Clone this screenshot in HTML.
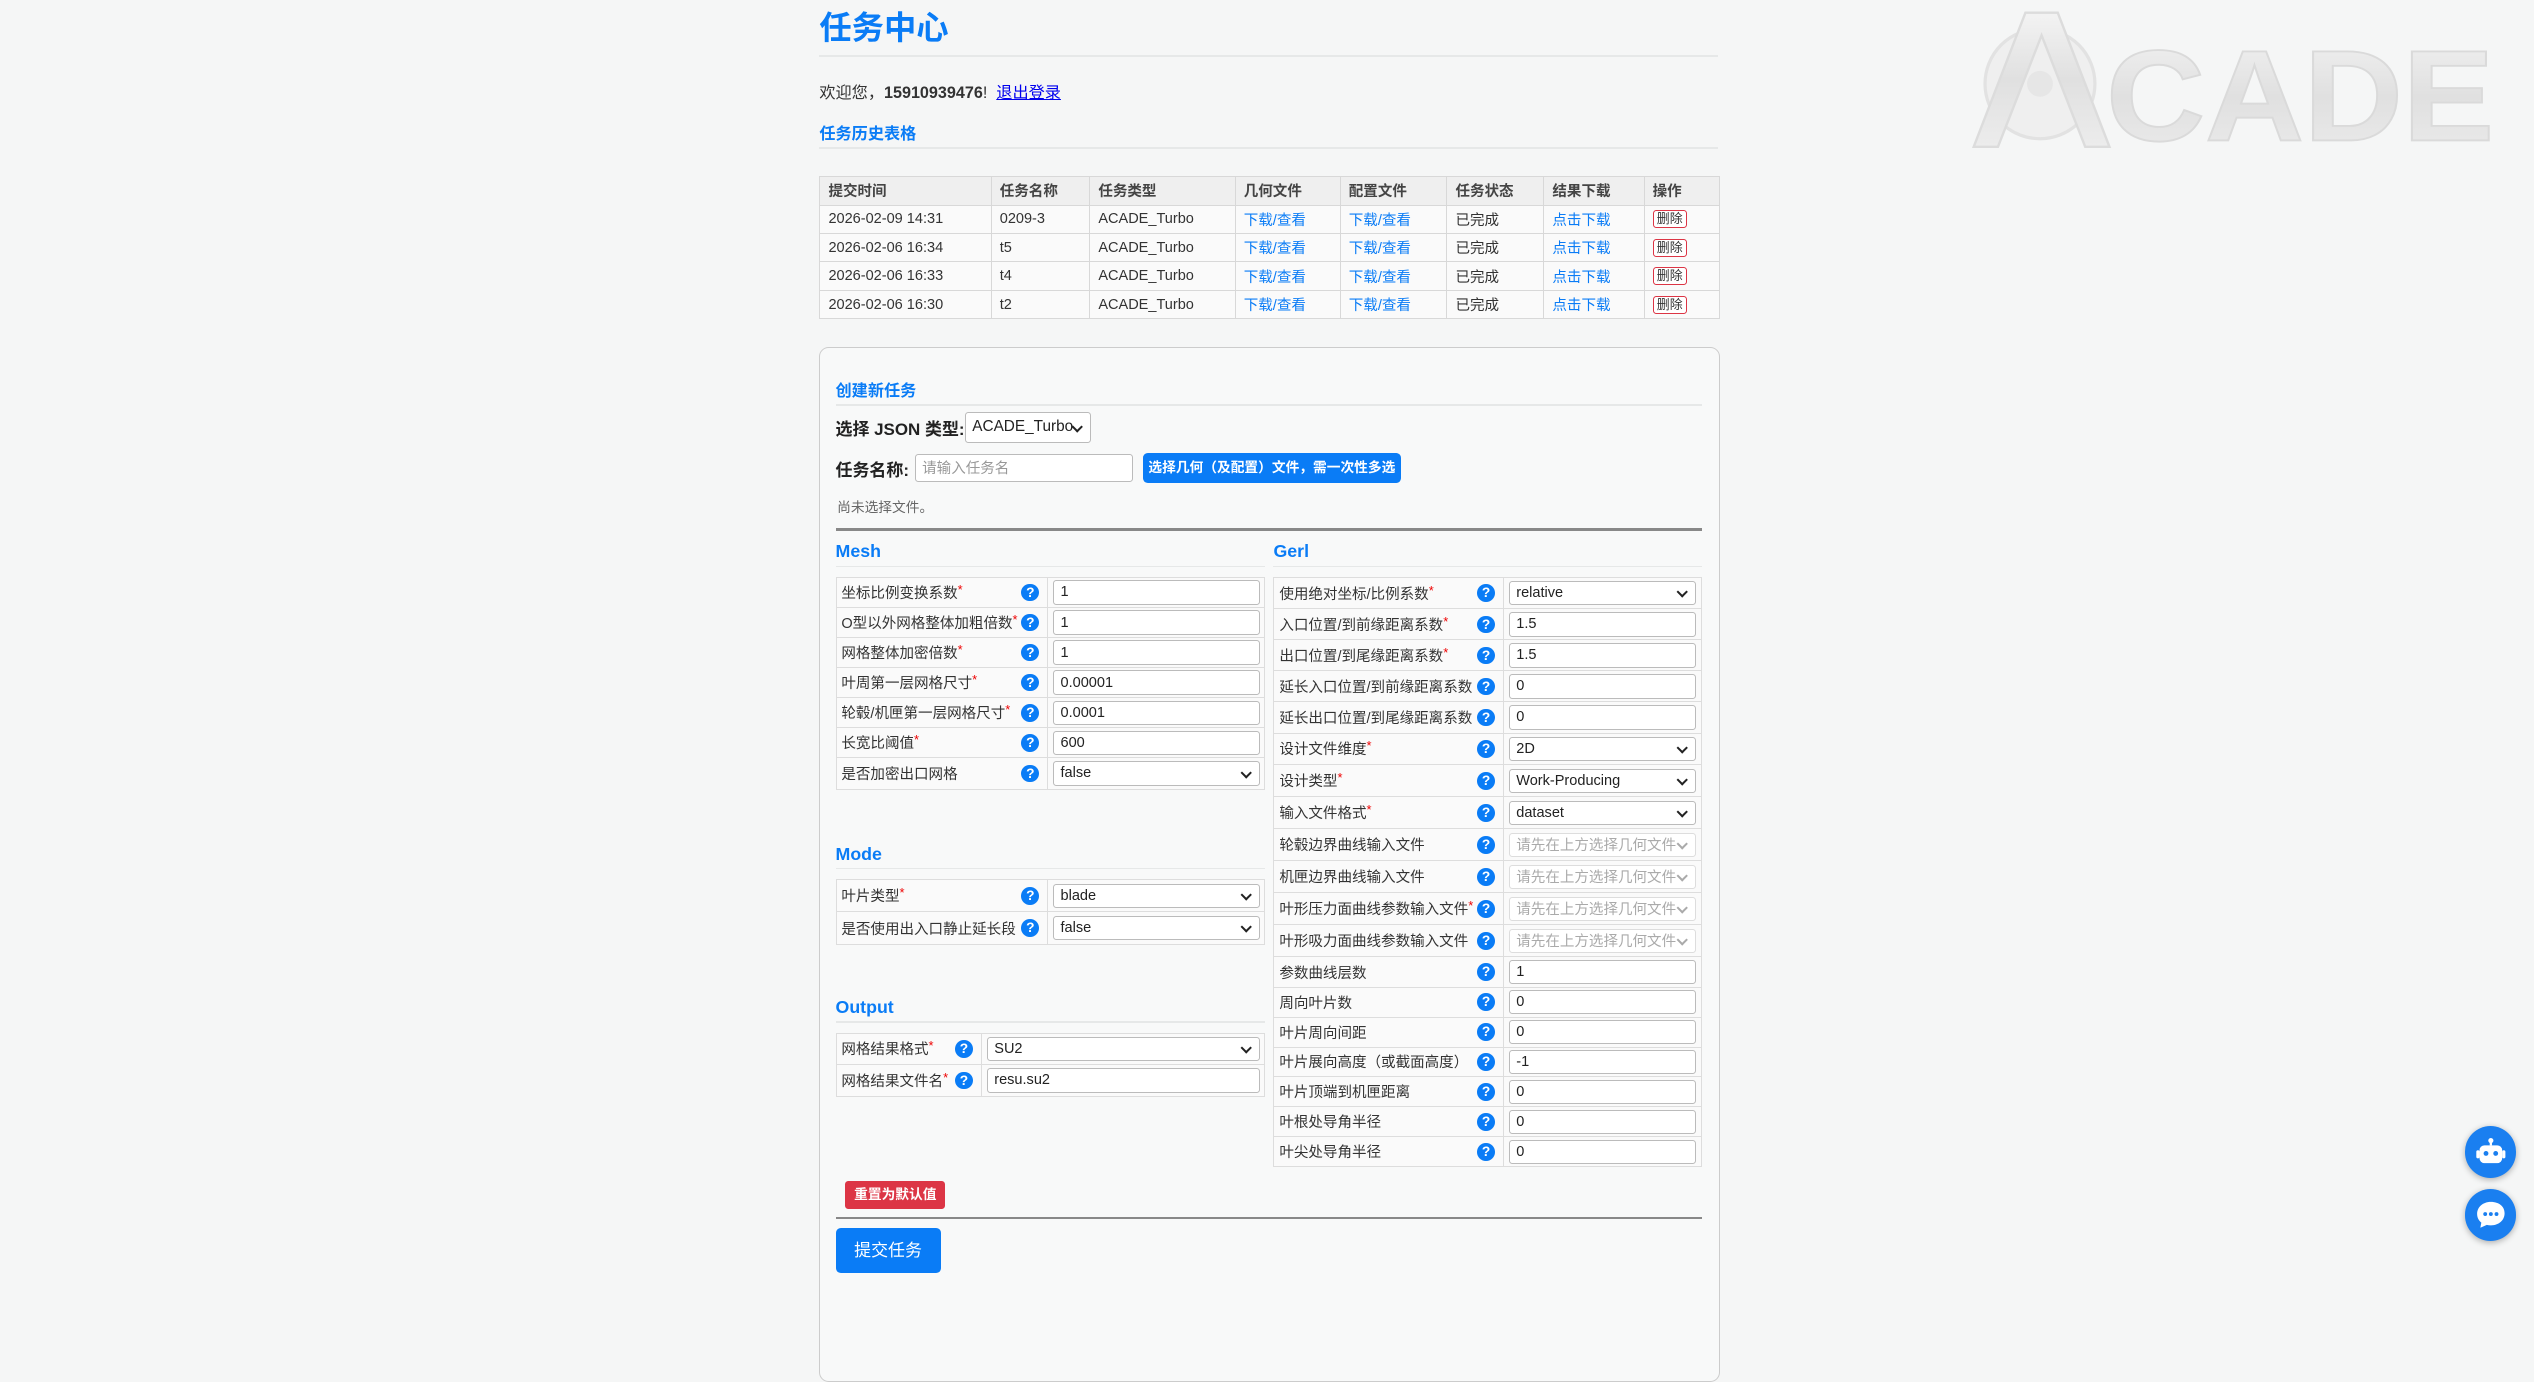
<!DOCTYPE html>
<html><head><meta charset="utf-8">
<style>
html{zoom:1.6161}
*{box-sizing:border-box;margin:0;padding:0}
body{width:1568px;height:783px;overflow:hidden;background:#f5f6f6;font-family:"Liberation Sans","Noto Sans CJK SC",sans-serif;color:#333;font-size:9.5px;position:relative}
.blue{color:#0a7cf6}
h1{position:absolute;left:507px;top:2px;font-size:20px;color:#0a7cf6;font-weight:bold}
.line{position:absolute;height:1px;background:#e6e8e8}
table{border-collapse:collapse;position:absolute}
.hist td,.hist th{border:1px solid #d8d8d8;height:17.6px;padding:0 5px;text-align:left;font-weight:normal;font-size:9px;white-space:nowrap}
.hist th{background:#efefef;font-weight:bold;color:#444}
.hist td{background:#fafafa}
.hist a{color:#0a7cf6;text-decoration:none}
.del{display:inline-block;border:1px solid #dc3545;border-radius:2px;font-size:8px;padding:0 2px;line-height:10px;background:#fff}
.card{position:absolute;left:507px;top:215px;width:557px;height:640px;border:1px solid #ccc;border-radius:6px;background:#f8f9f9}
.sec{position:absolute;font-weight:bold;color:#0a7cf6;font-size:11px}
.ft td{border:1px solid #ddd;padding:0 3px;font-size:9px;white-space:nowrap;background:#fafafa}
.ft td.l{position:relative}
.star{color:#e00;font-size:8px;vertical-align:top}
.q{position:absolute;right:5px;top:50%;margin-top:-5.5px;width:11px;height:11px;border-radius:50%;background:#0a7cf6;color:#fff;font-size:8.5px;font-weight:bold;text-align:center;line-height:11px}
.inp{display:flex;align-items:center;border:1px solid #bbb;border-radius:2px;background:#fff;height:15px;padding:0 4px;font-size:9px;color:#222;position:relative}
.sel:after{content:"";position:absolute;right:5px;top:50%;margin-top:-3px;width:4px;height:4px;border-right:1.5px solid #222;border-bottom:1.5px solid #222;transform:rotate(45deg)}
.dis{color:#aaa;border-color:#ddd}
.dis:after{border-color:#aaa}
.abs{position:absolute}
</style></head><body>
<h1>任务中心</h1>
<div class="line" style="left:507px;top:34px;width:556px"></div>
<div class="abs" style="left:507px;top:49px;font-size:10px">欢迎您，<b>15910939476</b>! &nbsp;<a href="#" style="color:#00e">退出登录</a></div>
<div class="abs blue" style="left:507px;top:74px;font-size:10px;font-weight:bold">任务历史表格</div>
<div class="line" style="left:507px;top:91px;width:556px"></div>
<table class="hist" style="left:507px;top:109px;width:557px">
<tr><th style="width:106px">提交时间</th><th style="width:61px">任务名称</th><th style="width:90px">任务类型</th><th style="width:65px">几何文件</th><th style="width:66px">配置文件</th><th style="width:60px">任务状态</th><th style="width:62px">结果下载</th><th>操作</th></tr>
<tr><td>2026-02-09 14:31</td><td>0209-3</td><td>ACADE_Turbo</td><td><a>下载/查看</a></td><td><a>下载/查看</a></td><td>已完成</td><td><a>点击下载</a></td><td><span class="del">删除</span></td></tr>
<tr><td>2026-02-06 16:34</td><td>t5</td><td>ACADE_Turbo</td><td><a>下载/查看</a></td><td><a>下载/查看</a></td><td>已完成</td><td><a>点击下载</a></td><td><span class="del">删除</span></td></tr>
<tr><td>2026-02-06 16:33</td><td>t4</td><td>ACADE_Turbo</td><td><a>下载/查看</a></td><td><a>下载/查看</a></td><td>已完成</td><td><a>点击下载</a></td><td><span class="del">删除</span></td></tr>
<tr><td>2026-02-06 16:30</td><td>t2</td><td>ACADE_Turbo</td><td><a>下载/查看</a></td><td><a>下载/查看</a></td><td>已完成</td><td><a>点击下载</a></td><td><span class="del">删除</span></td></tr>
</table>

<svg class="abs" style="left:1215px;top:2px" width="335" height="95" viewBox="0 0 335 95">
<defs><linearGradient id="g" x1="0" y1="0" x2="0" y2="1"><stop offset="0" stop-color="#f3f3f3"/><stop offset=".5" stop-color="#e0e0e0"/><stop offset="1" stop-color="#ececec"/></linearGradient></defs>
<circle cx="47" cy="50" r="34" fill="#efefef" stroke="#e2e2e2" stroke-width="2"/>
<circle cx="47" cy="50" r="8" fill="#e6e6e6"/>
<path d="M6 89 L38 6 L58 6 L90 89 L75 89 L48 20 L21 89 Z" fill="url(#g)" stroke="#dcdcdc" stroke-width="1.5"/>
<text x="88" y="85" font-family="Liberation Sans" font-weight="bold" font-size="80" fill="url(#g)" stroke="#dadada" stroke-width="1.2" textLength="240" lengthAdjust="spacingAndGlyphs">CADE</text>
</svg>

<div class="card"></div>
<div class="sec" style="left:517px;top:233px;font-size:10px">创建新任务</div>
<div class="line" style="left:517px;top:250px;width:536px"></div>
<div class="abs" style="left:517px;top:257px;font-size:10.5px;font-weight:bold;color:#222">选择 JSON 类型:</div>
<div class="inp sel abs" style="left:597px;top:255px;width:78px;height:19px;font-size:9.5px;padding-right:14px">ACADE_Turbo</div>
<div class="abs" style="left:517px;top:282px;font-size:10.5px;font-weight:bold;color:#222">任务名称:</div>
<div class="inp abs" style="left:566px;top:281px;width:135px;height:17px;color:#999">请输入任务名</div>
<div class="abs" style="left:707px;top:280px;width:160px;height:19px;background:#0a7cf6;color:#fff;border-radius:3px;font-size:8.5px;font-weight:bold;text-align:center;line-height:19px">选择几何（及配置）文件，需一次性多选</div>
<div class="abs" style="left:518px;top:307px;font-size:8.5px;color:#666">尚未选择文件。</div>
<div class="abs" style="left:517px;top:327px;width:536px;height:1.5px;background:#888"></div>

<div class="sec" style="left:517px;top:335px">Mesh</div>
<div class="line" style="left:517px;top:350px;width:266px"></div>
<div class="sec" style="left:788px;top:335px">Gerl</div>
<div class="line" style="left:788px;top:350px;width:265px"></div>

<table class="ft" style="left:517px;top:357px;width:266px">
<tr style="height:18.6px"><td class="l" style="width:131px">坐标比例变换系数<span class="star">*</span><span class="q">?</span></td><td><span class="inp">1</span></td></tr>
<tr style="height:18.6px"><td class="l">O型以外网格整体加粗倍数<span class="star">*</span><span class="q">?</span></td><td><span class="inp">1</span></td></tr>
<tr style="height:18.6px"><td class="l">网格整体加密倍数<span class="star">*</span><span class="q">?</span></td><td><span class="inp">1</span></td></tr>
<tr style="height:18.6px"><td class="l">叶周第一层网格尺寸<span class="star">*</span><span class="q">?</span></td><td><span class="inp">0.00001</span></td></tr>
<tr style="height:18.6px"><td class="l">轮毂/机匣第一层网格尺寸<span class="star">*</span><span class="q">?</span></td><td><span class="inp">0.0001</span></td></tr>
<tr style="height:18.6px"><td class="l">长宽比阈值<span class="star">*</span><span class="q">?</span></td><td><span class="inp">600</span></td></tr>
<tr style="height:19.5px"><td class="l">是否加密出口网格<span class="q">?</span></td><td><span class="inp sel">false</span></td></tr>
</table>

<div class="sec" style="left:517px;top:522px">Mode</div>
<div class="line" style="left:517px;top:537px;width:266px"></div>
<table class="ft" style="left:517px;top:544px;width:266px">
<tr style="height:20px"><td class="l" style="width:131px">叶片类型<span class="star">*</span><span class="q">?</span></td><td><span class="inp sel">blade</span></td></tr>
<tr style="height:20px"><td class="l">是否使用出入口静止延长段<span class="q">?</span></td><td><span class="inp sel">false</span></td></tr>
</table>

<div class="sec" style="left:517px;top:617px">Output</div>
<div class="line" style="left:517px;top:632px;width:266px"></div>
<table class="ft" style="left:517px;top:639px;width:266px">
<tr style="height:19.5px"><td class="l" style="width:90px">网格结果格式<span class="star">*</span><span class="q">?</span></td><td><span class="inp sel">SU2</span></td></tr>
<tr style="height:19.5px"><td class="l">网格结果文件名<span class="star">*</span><span class="q">?</span></td><td><span class="inp">resu.su2</span></td></tr>
</table>

<table class="ft" style="left:788px;top:357px;width:265px">
<tr style="height:19.5px"><td class="l" style="width:142px">使用绝对坐标/比例系数<span class="star">*</span><span class="q">?</span></td><td><span class="inp sel">relative</span></td></tr>
<tr style="height:19.2px"><td class="l">入口位置/到前缘距离系数<span class="star">*</span><span class="q">?</span></td><td><span class="inp">1.5</span></td></tr>
<tr style="height:19.2px"><td class="l">出口位置/到尾缘距离系数<span class="star">*</span><span class="q">?</span></td><td><span class="inp">1.5</span></td></tr>
<tr style="height:19.2px"><td class="l">延长入口位置/到前缘距离系数<span class="q">?</span></td><td><span class="inp">0</span></td></tr>
<tr style="height:19.2px"><td class="l">延长出口位置/到尾缘距离系数<span class="q">?</span></td><td><span class="inp">0</span></td></tr>
<tr style="height:19.8px"><td class="l">设计文件维度<span class="star">*</span><span class="q">?</span></td><td><span class="inp sel">2D</span></td></tr>
<tr style="height:19.8px"><td class="l">设计类型<span class="star">*</span><span class="q">?</span></td><td><span class="inp sel">Work-Producing</span></td></tr>
<tr style="height:19.8px"><td class="l">输入文件格式<span class="star">*</span><span class="q">?</span></td><td><span class="inp sel">dataset</span></td></tr>
<tr style="height:19.8px"><td class="l">轮毂边界曲线输入文件<span class="q">?</span></td><td><span class="inp sel dis">请先在上方选择几何文件</span></td></tr>
<tr style="height:19.8px"><td class="l">机匣边界曲线输入文件<span class="q">?</span></td><td><span class="inp sel dis">请先在上方选择几何文件</span></td></tr>
<tr style="height:19.8px"><td class="l">叶形压力面曲线参数输入文件<span class="star">*</span><span class="q">?</span></td><td><span class="inp sel dis">请先在上方选择几何文件</span></td></tr>
<tr style="height:19.8px"><td class="l">叶形吸力面曲线参数输入文件<span class="q">?</span></td><td><span class="inp sel dis">请先在上方选择几何文件</span></td></tr>
<tr style="height:18.8px"><td class="l">参数曲线层数<span class="q">?</span></td><td><span class="inp">1</span></td></tr>
<tr style="height:18.5px"><td class="l">周向叶片数<span class="q">?</span></td><td><span class="inp">0</span></td></tr>
<tr style="height:18.5px"><td class="l">叶片周向间距<span class="q">?</span></td><td><span class="inp">0</span></td></tr>
<tr style="height:18.5px"><td class="l">叶片展向高度（或截面高度）<span class="q">?</span></td><td><span class="inp">-1</span></td></tr>
<tr style="height:18.5px"><td class="l">叶片顶端到机匣距离<span class="q">?</span></td><td><span class="inp">0</span></td></tr>
<tr style="height:18.5px"><td class="l">叶根处导角半径<span class="q">?</span></td><td><span class="inp">0</span></td></tr>
<tr style="height:18.5px"><td class="l">叶尖处导角半径<span class="q">?</span></td><td><span class="inp">0</span></td></tr>
</table>

<div class="abs" style="left:523px;top:731px;width:62px;height:17px;background:#dc3545;color:#fff;border-radius:2px;font-size:8.5px;font-weight:bold;text-align:center;line-height:17px">重置为默认值</div>
<div class="abs" style="left:517px;top:753px;width:536px;height:1.5px;background:#888"></div>
<div class="abs" style="left:517px;top:760px;width:65px;height:28px;background:#0a7cf6;color:#fff;border-radius:3px;font-size:10.5px;text-align:center;line-height:28px">提交任务</div>

<div class="abs" style="left:1525px;top:697px;width:32px;height:32px;border-radius:50%;background:#1a7ff0;box-shadow:0 1px 4px rgba(0,0,0,.3)">
<svg width="32" height="32" viewBox="0 0 32 32"><rect x="9" y="12" width="14" height="11" rx="3" fill="#fff"/><circle cx="16" cy="9" r="1.6" fill="#fff"/><rect x="15.3" y="9" width="1.4" height="3" fill="#fff"/><rect x="7" y="15" width="2" height="5" rx="1" fill="#fff"/><rect x="23" y="15" width="2" height="5" rx="1" fill="#fff"/><circle cx="13" cy="17" r="1.5" fill="#1a7ff0"/><circle cx="19" cy="17" r="1.5" fill="#1a7ff0"/></svg></div>
<div class="abs" style="left:1525px;top:736px;width:32px;height:32px;border-radius:50%;background:#1a7ff0;box-shadow:0 1px 4px rgba(0,0,0,.3)">
<svg width="32" height="32" viewBox="0 0 32 32"><path d="M16 8c-5 0 -8.5 3.3 -8.5 7.5 0 2.2 1 4 2.6 5.3L9.5 24l4-1.8c.8.2 1.6.3 2.5.3 5 0 8.5-3.3 8.5-7.5S21 8 16 8z" fill="#fff"/><circle cx="12.5" cy="15.5" r="1.2" fill="#1a7ff0"/><circle cx="16" cy="15.5" r="1.2" fill="#1a7ff0"/><circle cx="19.5" cy="15.5" r="1.2" fill="#1a7ff0"/></svg></div>
</body></html>
